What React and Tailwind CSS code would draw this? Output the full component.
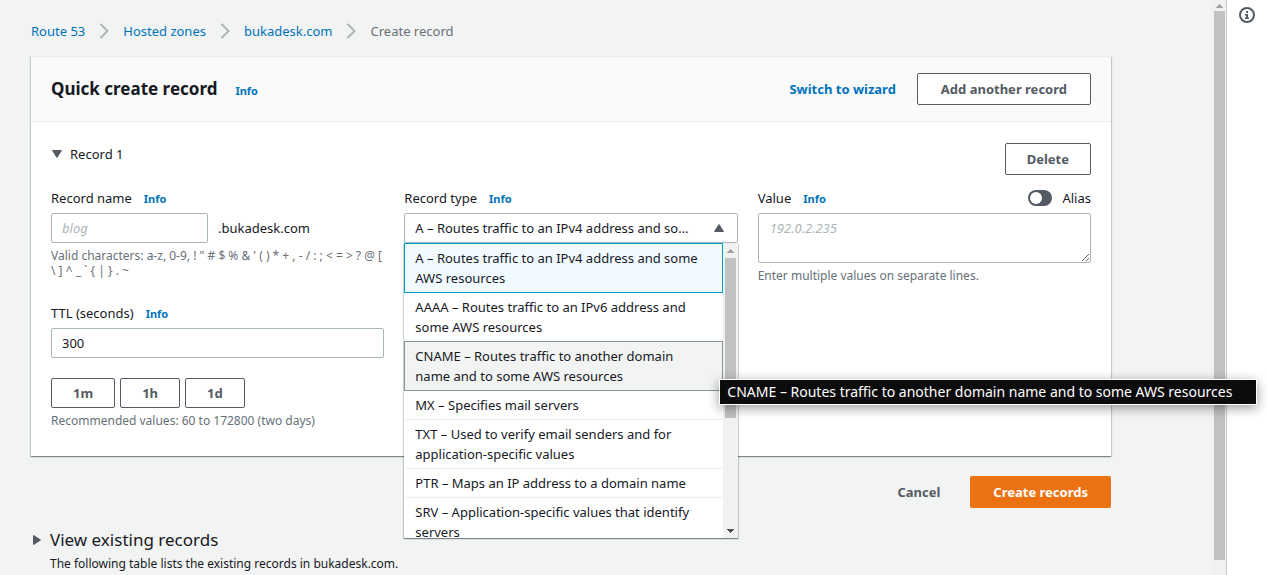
import { useState } from "react";

const crumbs = ["Route 53", "Hosted zones", "bukadesk.com"];

const recordTypes = [
  { id: "A", label: "A – Routes traffic to an IPv4 address and some AWS resources" },
  { id: "AAAA", label: "AAAA – Routes traffic to an IPv6 address and some AWS resources" },
  { id: "CNAME", label: "CNAME – Routes traffic to another domain name and to some AWS resources" },
  { id: "MX", label: "MX – Specifies mail servers" },
  { id: "TXT", label: "TXT – Used to verify email senders and for application-specific values" },
  { id: "PTR", label: "PTR – Maps an IP address to a domain name" },
  { id: "SRV", label: "SRV – Application-specific values that identify servers" },
];

function Triangle({ className }) {
  return (
    <svg viewBox="0 0 10 8" className={className} aria-hidden="true">
      <path d="M0.5 0.5h9L5 7.5z" fill="#545b64" stroke="#545b64" strokeLinejoin="round" />
    </svg>
  );
}

function Info() {
  return (
    <a href="#info" className="text-[11px] leading-5 font-bold text-[#0073bb]">
      Info
    </a>
  );
}

function Button({ children, className }) {
  return (
    <button
      type="button"
      className={`rounded-[2px] border border-[#545b64] bg-white text-[13px] font-bold text-[#545b64] ${className}`}
    >
      {children}
    </button>
  );
}

function FieldLabel({ htmlFor, children }) {
  return (
    <div className="flex h-5 items-baseline gap-3">
      <label htmlFor={htmlFor}>{children}</label>
      <Info />
    </div>
  );
}

function ScrollArrow({ up, color }) {
  return (
    <svg viewBox="0 0 7 4" className="h-1 w-[7px]" shapeRendering="crispEdges" aria-hidden="true">
      <path d={up ? "M0 4h7L3.500 0z" : "M0 0h7L3.500 4z"} fill={color} />
    </svg>
  );
}

function optionStyle(id, selected) {
  if (id === selected) return "border-[#00a1c9] bg-[#f1faff]";
  if (id === "CNAME") return "relative border-[#879596] bg-[#f2f3f3]";
  if (id === "AAAA") return "border-transparent";
  return "border-transparent border-b-[#eaeded]";
}

function RecordType() {
  const [type, setType] = useState("A");
  return (
    <div>
      <FieldLabel htmlFor="type">Record type</FieldLabel>
      <div className="relative mt-[5px]">
        <select
          id="type"
          value={type}
          onChange={(e) => setType(e.target.value)}
          className="block h-[30px] w-full appearance-none overflow-hidden rounded-[2px] border border-[#aab7b8] bg-white pr-[40px] pl-[10px] text-ellipsis"
        >
          {recordTypes.map((t) => (
            <option key={t.id} value={t.id}>
              {t.label}
            </option>
          ))}
        </select>
        <Triangle className="pointer-events-none absolute top-[11px] right-[14px] h-2 w-[10px] rotate-180" />

        <div className="absolute inset-x-0 top-[30px] z-10 flex h-[295px] bg-white shadow-[0_1px_1px_0_rgba(0,28,36,.3),1px_1px_1px_0_rgba(0,28,36,.15),-1px_1px_1px_0_rgba(0,28,36,.15)]">
          <ul role="listbox" aria-label="Record type" className="min-w-0 flex-1 overflow-hidden">
            {recordTypes.map((t) => (
              <li
                key={t.id}
                role="option"
                aria-selected={t.id === type}
                onClick={() => setType(t.id)}
                className={`-mb-px border py-1 pr-[14px] pl-[10px] ${optionStyle(t.id, type)}`}
              >
                {t.label}
              </li>
            ))}
          </ul>
          <div className="flex w-[15px] flex-col items-center bg-[#f1f1f1]" aria-hidden="true">
            <div className="flex h-[15px] items-center">
              <ScrollArrow up color="#a3a3a3" />
            </div>
            <div className="h-[160px] w-[11px] bg-[#c1c1c1]" />
            <div className="mt-auto flex h-[15px] items-center">
              <ScrollArrow color="#505050" />
            </div>
          </div>
        </div>

        <div
          role="tooltip"
          className="absolute top-[166px] left-[315px] z-20 w-[538px] border border-white bg-[#0d0c0d] px-[7px] text-[14px] leading-6 whitespace-nowrap text-white shadow-[0_3px_12px_rgba(0,0,0,.4)]"
        >
          CNAME – Routes traffic to another domain name and to some AWS resources
        </div>
      </div>
    </div>
  );
}

export default function App() {
  const [ttl, setTtl] = useState("300");
  return (
    <div className="flex h-screen overflow-hidden bg-[#f2f3f3] font-['Noto_Sans',sans-serif] text-[13px] leading-5 text-[#16191f]">
      <main className="min-w-0 flex-1 pt-[21px] pr-[100px] pl-[31px]">
        <nav aria-label="Breadcrumb" className="flex items-center">
          {crumbs.map((c) => (
            <span key={c} className="flex items-center">
              <a href="#crumb" className="text-[#0073bb]">
                {c}
              </a>
              <svg viewBox="0 0 10 16" className="mx-[14px] h-4 w-[10px]" fill="none" aria-hidden="true">
                <path d="M1.500 1L8.500 8L1.500 15" stroke="#aab7b8" strokeWidth="2" />
              </svg>
            </span>
          ))}
          <span className="text-[#687078]">Create record</span>
        </nav>

        <section className="mt-[15px] border-t border-[#eaeded] bg-white shadow-[0_1px_1px_0_rgba(0,28,36,.3),1px_1px_1px_0_rgba(0,28,36,.15),-1px_1px_1px_0_rgba(0,28,36,.15)]">
          <header className="flex h-[65px] items-center border-b border-[#eaeded] bg-[#fafafa] px-5">
            <div className="flex items-baseline gap-[18px]">
              <h1 className="text-[17px] leading-[22px] font-bold">Quick create record</h1>
              <Info />
            </div>
            <a href="#wizard" className="mr-[21px] ml-auto font-bold text-[#0073bb]">
              Switch to wizard
            </a>
            <Button className="h-8 px-[23px]">Add another record</Button>
          </header>

          <div className="px-5 pt-[21px] pb-7">
            <div className="flex items-start">
              <button type="button" aria-expanded="true" className="flex items-center gap-[7px] leading-[22px]">
                <Triangle className="h-2 w-3" />
                Record 1
              </button>
              <Button className="ml-auto h-8 px-[21px]">Delete</Button>
            </div>

            <div className="mt-[13px] grid grid-cols-3 gap-5">
              <div>
                <FieldLabel htmlFor="name">Record name</FieldLabel>
                <div className="mt-[5px] flex items-center gap-[10px]">
                  <input
                    id="name"
                    placeholder="blog"
                    className="h-[30px] w-[157px] rounded-[2px] border border-[#aab7b8] bg-white px-[10px] placeholder:text-[#aab7b8] placeholder:italic"
                  />
                  .bukadesk.com
                </div>
                <p className="mt-[5px] text-[12px] leading-[15px] text-[#687078]">
                  {"Valid characters: a-z, 0-9, ! \" # $ % & ' ( ) * + , - / : ; < = > ? @ [ \\ ] ^ _ ` { | } . ~"}
                </p>

                <div className="mt-[25px]">
                  <FieldLabel htmlFor="ttl">TTL (seconds)</FieldLabel>
                  <input
                    id="ttl"
                    value={ttl}
                    onChange={(e) => setTtl(e.target.value)}
                    className="mt-[5px] block h-[30px] w-full rounded-[2px] border border-[#aab7b8] bg-white px-[10px]"
                  />
                  <div className="mt-5 flex gap-[5px]">
                    <Button className="h-[30px] px-[21px]">1m</Button>
                    <Button className="h-[30px] px-[21px]">1h</Button>
                    <Button className="h-[30px] px-[21px]">1d</Button>
                  </div>
                  <p className="mt-[5px] text-[12px] leading-[15px] text-[#687078]">
                    Recommended values: 60 to 172800 (two days)
                  </p>
                </div>
              </div>

              <RecordType />

              <div>
                <div className="flex items-center justify-between">
                  <FieldLabel htmlFor="value">Value</FieldLabel>
                  <label className="flex items-center gap-[10px]">
                    <input
                      type="checkbox"
                      role="switch"
                      className="h-4 w-6 appearance-none rounded-full bg-[#545b64] p-[2px] before:block before:size-3 before:rounded-full before:bg-white"
                    />
                    Alias
                  </label>
                </div>
                <textarea
                  id="value"
                  placeholder="192.0.2.235"
                  className="mt-[5px] block h-[50px] w-full rounded-[2px] border border-[#aab7b8] bg-white px-[11px] py-1 placeholder:text-[#aab7b8] placeholder:italic"
                />
                <p className="mt-[5px] text-[12px] leading-[15px] text-[#687078]">
                  Enter multiple values on separate lines.
                </p>
              </div>
            </div>
          </div>
        </section>

        <div className="mt-5 flex items-center justify-end gap-[30px]">
          <button type="button" className="font-bold text-[#545b64]">
            Cancel
          </button>
          <button type="button" className="h-8 rounded-[2px] bg-[#ec7211] px-[23px] font-bold text-white">
            Create records
          </button>
        </div>

        <section className="mt-5">
          <button type="button" aria-expanded="false" className="flex items-center gap-[7px] text-[17px] leading-6">
            <Triangle className="h-2 w-3 -rotate-90" />
            View existing records
          </button>
          <p className="pl-[19px] text-[12px] leading-6">The following table lists the existing records in bukadesk.com.</p>
        </section>
      </main>

      <div className="flex w-[15px] flex-col items-end bg-[#f1f1f1] pr-px" aria-hidden="true">
        <div className="flex h-[11px] w-[11px] items-center justify-center">
          <ScrollArrow up color="#a3a3a3" />
        </div>
        <div className="h-[549px] w-[11px] bg-[#c1c1c1]" />
      </div>

      <aside className="w-[41px] shrink-0 border-l border-[#c6cacb] bg-white pt-[7px] pl-3">
        <button type="button" aria-label="Help panel" className="block">
          <svg viewBox="0 0 16 16" className="size-4" fill="none">
            <circle cx="8" cy="8" r="7" stroke="#545b64" strokeWidth="2" />
            <path d="M7 4h2v2H7zM6 7h3v3.500h1V12H6v-1.500h1V8.500H6z" fill="#545b64" />
          </svg>
        </button>
      </aside>
    </div>
  );
}
